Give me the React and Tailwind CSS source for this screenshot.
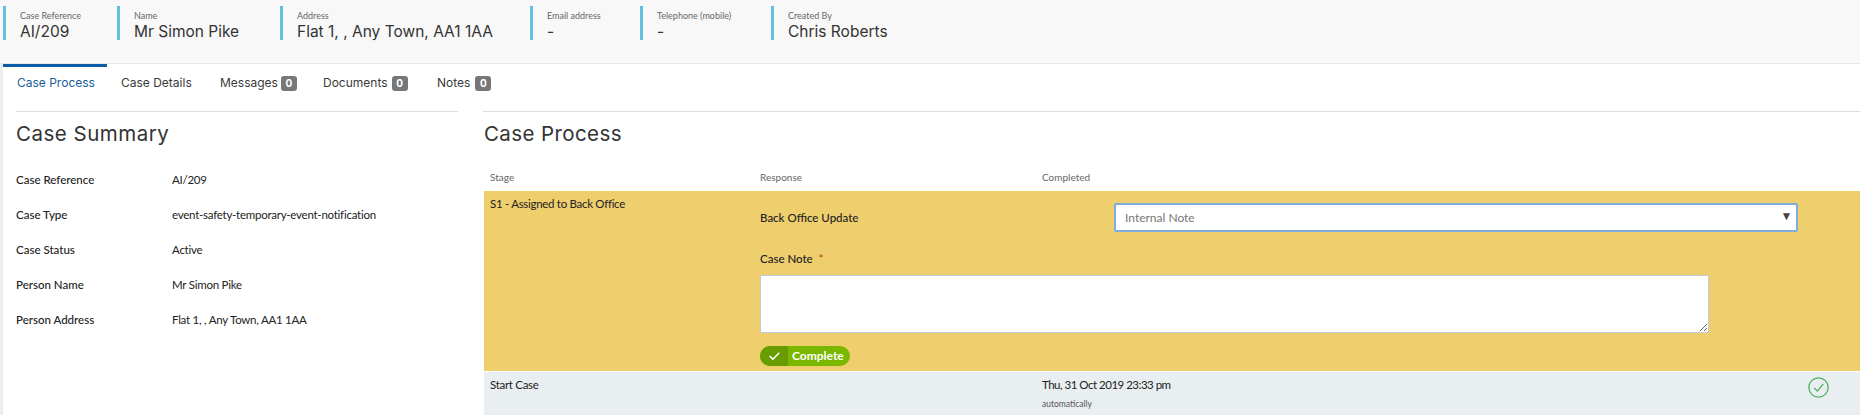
import { Check } from "lucide-react";

const heading = "font-['Inter','Noto_Sans',sans-serif]";
const body = "font-['Lato','Noto_Sans',sans-serif]";

const headerItems = [
  { label: "Case Reference", value: "AI/209", width: "w-[114px]" },
  { label: "Name", value: "Mr Simon Pike", width: "w-[163px]" },
  { label: "Address", value: "Flat 1, , Any Town, AA1 1AA", width: "w-[250px]" },
  { label: "Email address", value: "-", width: "w-[110px]" },
  { label: "Telephone (mobile)", value: "-", width: "w-[131px]" },
  { label: "Created By", value: "Chris Roberts", width: "w-[200px]" },
];

const tabs = [
  { name: "Case Details", count: null, width: "w-[99px]", gap: "gap-[3px]" },
  { name: "Messages", count: 0, width: "w-[103px]", gap: "gap-[3px]" },
  { name: "Documents", count: 0, width: "w-[114px]", gap: "gap-[4px]" },
  { name: "Notes", count: 0, width: "w-[80px]", gap: "gap-[5px]" },
];

const summary = [
  ["Case Reference", "AI/209"],
  ["Case Type", "event-safety-temporary-event-notification"],
  ["Case Status", "Active"],
  ["Person Name", "Mr Simon Pike"],
  ["Person Address", "Flat 1, , Any Town, AA1 1AA"],
];

const App = () => {
  return (
    <div className={`h-[415px] w-[1860px] overflow-hidden bg-white text-[#333] ${body}`}>
      {/* top strip */}
      <div className="flex h-[64px] items-start border-b border-[#e8e8e8] bg-[#f8f8f8] pl-[3px] pt-[6px]">
        {headerItems.map((item) => (
          <div key={item.label} className={`h-[34px] ${item.width} border-l-[3px] border-[#63c1e0]`}>
            <div className="pl-[14px]">
              <div className="h-[12px] text-[9px] leading-[20px] text-[#666]">{item.label}</div>
              <div className={`mt-[4px] text-[15.5px] leading-[20px] text-[#333] ${heading}`}>{item.value}</div>
            </div>
          </div>
        ))}
      </div>

      <div className="border-l-[3px] border-[#eee]">
        {/* tabs */}
        <div className={`flex h-[47px] text-[12px] ${heading}`}>
          <div className="h-full w-[104px] border-t-[3px] border-[#0a5ca8] pl-[14px] pt-[6px] leading-[20px] text-[#1a5e9a]">
            Case Process
          </div>
          <div className="w-[14px]" />
          {tabs.map((tab) => (
            <div key={tab.name} className={`${tab.width} ${tab.gap} mt-[9px] flex h-[20px] items-center text-[#3a3a3a]`}>
              <span>{tab.name}</span>
              {tab.count !== null && (
                <span className="flex h-[15px] w-[16px] items-center justify-center rounded-[3px] bg-[#777] text-[10px] font-bold text-white">
                  {tab.count}
                </span>
              )}
            </div>
          ))}
        </div>

        <div className="flex">
          {/* summary column */}
          <div className="ml-[13px] w-[442px] shrink-0">
            <div className="border-t border-[#ddd] pt-[8px]">
              <h2 className={`text-[20.5px] font-normal leading-[28px] tracking-[0.5px] ${heading}`}>Case Summary</h2>
            </div>
            <div className="mt-[14px] text-[11.5px] tracking-[-0.25px] text-[#222]">
              {summary.map(([label, value]) => (
                <div key={label} className="flex h-[35px] items-center">
                  <div className="w-[156px] font-medium tracking-[0px]">{label}</div>
                  <div>{value}</div>
                </div>
              ))}
            </div>
          </div>

          {/* process column */}
          <div className="ml-[25px] grow">
            <div className="border-t border-[#ddd] pt-[8px]">
              <h2 className={`pl-px text-[20.5px] font-normal leading-[28px] tracking-[0.4px] ${heading}`}>Case Process</h2>
            </div>
            <div className="pl-px">
              <div className="mt-[21px] flex h-[22px] text-[10px] leading-[16px] text-[#666]">
                <div className="w-[276px] pl-[6px]">Stage</div>
                <div className="w-[282px]">Response</div>
                <div>Completed</div>
              </div>

              <div className="flex h-[180px] bg-[#efce6e] text-[11.5px] tracking-[-0.3px] text-[#222]">
                <div className="w-[276px] pl-[6px] pt-[5px] leading-[16px]">S1 - Assigned to Back Office</div>
                <div className="grow pt-[12px]">
                  <div className="flex h-[29px] items-center">
                    <div className="w-[354px] font-medium tracking-[0px]">Back Office Update</div>
                    <div className="relative w-[684px]">
                      <select className="h-[29px] w-full appearance-none rounded-[2px] border-2 border-[#7eaee0] bg-white pl-[9px] text-[12px] tracking-[0px] text-[#777]">
                        <option>Internal Note</option>
                      </select>
                      <span className="absolute right-[6px] top-[4px] text-[12px] text-[#444]">▼</span>
                    </div>
                  </div>
                  <div className="mt-[19px] h-[24px] font-medium leading-[16px] tracking-[0px]">
                    Case Note <span className="ml-[3px] text-[#c0392b]">*</span>
                  </div>
                  <textarea className="block h-[58px] w-[949px] rounded-none border border-[#c3ccd6] bg-white" />
                  <button className="mt-[13px] flex h-[20px] w-[90px] items-center overflow-hidden rounded-full bg-[#7ab800] text-[12px] font-bold tracking-[0px] text-white">
                    <span className="flex h-full w-[28px] items-center justify-center bg-[#689c00]">
                      <Check size={13} strokeWidth={3} />
                    </span>
                    <span className="pl-[4px]">Complete</span>
                  </button>
                </div>
              </div>

              <div className="mt-px flex h-[43px] bg-[#e9eef0] text-[11.5px] tracking-[-0.3px] text-[#222]">
                <div className="w-[276px] pl-[6px] pt-[5px] leading-[16px]">Start Case</div>
                <div className="w-[282px]" />
                <div className="pt-[5px] leading-[16px]">
                  <div className="tracking-[-0.5px]">Thu, 31 Oct 2019 23:33 pm</div>
                  <div className="mt-[3px] text-[8.5px] tracking-[0px] text-[#555]">automatically</div>
                </div>
                <div className="ml-auto mr-[31px] pt-[5px]">
                  <svg width="21" height="21" viewBox="0 0 20 20" fill="none" stroke="#4caf63" strokeWidth="1.2">
                    <circle cx="10" cy="10" r="9.2" />
                    <path d="M6 10.5l3 3 5.5-7" />
                  </svg>
                </div>
              </div>
            </div>
          </div>
        </div>
      </div>
    </div>
  );
};

export default App;
